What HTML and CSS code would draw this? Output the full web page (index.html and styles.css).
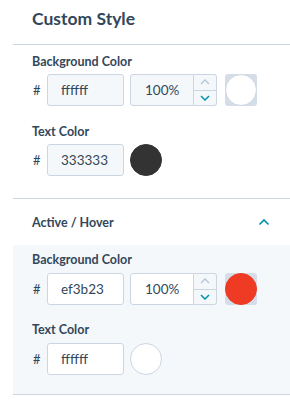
FILE: index.html
```html
<!DOCTYPE html>
<html lang="en">
<head>
    <meta charset="UTF-8">
    <meta name="viewport" content="width=device-width, initial-scale=1.0">
    <title>Custom Style</title>
    <link rel="stylesheet" href="styles.css">
</head>
<body>
    <div class="panel">
        <h3 class="title">Custom Style</h3>

        <div class="group">
            <div class="field">
                <label class="field-label">Background Color</label>
                <div class="field-row">
                    <span class="hash">#</span>
                    <input class="hex-input" type="text" value="ffffff">
                    <div class="alpha">
                        <input class="alpha-input" type="text" value="100%">
                        <div class="spinner">
                            <span class="spin spin-up">
                                <svg width="10" height="6" viewBox="0 0 10 6"><path d="M1 5 L5 1 L9 5" fill="none" stroke="#b6c5d6" stroke-width="1.3"/></svg>
                            </span>
                            <span class="spin spin-down">
                                <svg width="10" height="6" viewBox="0 0 10 6"><path d="M1 1 L5 5 L9 1" fill="none" stroke="#0091ae" stroke-width="1.5"/></svg>
                            </span>
                        </div>
                    </div>
                    <div class="swatch-alpha"><span class="dot dot-white"></span></div>
                </div>
            </div>
            <div class="field">
                <label class="field-label">Text Color</label>
                <div class="field-row">
                    <span class="hash">#</span>
                    <input class="hex-input" type="text" value="333333">
                    <span class="dot dot-dark"></span>
                </div>
            </div>
        </div>

        <div class="section-head">
            <span>Active / Hover</span>
            <svg width="12" height="8" viewBox="0 0 12 8"><path d="M1.5 6.5 L6 2 L10.5 6.5" fill="none" stroke="#0091ae" stroke-width="1.6"/></svg>
        </div>

        <div class="group group-shaded">
            <div class="field">
                <label class="field-label">Background Color</label>
                <div class="field-row">
                    <span class="hash">#</span>
                    <input class="hex-input" type="text" value="ef3b23">
                    <div class="alpha">
                        <input class="alpha-input" type="text" value="100%">
                        <div class="spinner">
                            <span class="spin spin-up">
                                <svg width="10" height="6" viewBox="0 0 10 6"><path d="M1 5 L5 1 L9 5" fill="none" stroke="#b6c5d6" stroke-width="1.3"/></svg>
                            </span>
                            <span class="spin spin-down">
                                <svg width="10" height="6" viewBox="0 0 10 6"><path d="M1 1 L5 5 L9 1" fill="none" stroke="#0091ae" stroke-width="1.5"/></svg>
                            </span>
                        </div>
                    </div>
                    <div class="swatch-alpha"><span class="dot dot-red"></span></div>
                </div>
            </div>
            <div class="field">
                <label class="field-label">Text Color</label>
                <div class="field-row">
                    <span class="hash">#</span>
                    <input class="hex-input" type="text" value="ffffff">
                    <span class="dot dot-white"></span>
                </div>
            </div>
        </div>
    </div>
</body>
</html>
```

FILE: styles.css
```css
body {
    font-family: Lato, "Noto Sans", sans-serif;
    margin: 0;
    padding: 0;
    background-color: white;
    color: #33475b;
}
.panel {
    margin-left: 13px;
}
.title {
    margin: 0;
    height: 45px;
    padding: 7px 0 0 19px;
    box-sizing: border-box;
    font-size: 17.5px;
    font-weight: 700;
    line-height: 24px;
    border-bottom: 1px solid #cbd6e2;
}
.group {
    padding: 9px 19px 22px;
    border-bottom: 1px solid #cbd6e2;
}
.group-shaded {
    background-color: #f5f8fa;
    padding: 7px 19px 19px;
}
.field + .field {
    margin-top: 18px;
}
.group-shaded .field + .field {
    margin-top: 17px;
}
.field-label {
    display: block;
    font-size: 12.5px;
    font-weight: 700;
    line-height: 16px;
    margin-bottom: 4px;
}
.group-shaded .field-label {
    margin-bottom: 5px;
}
.field-row {
    display: flex;
    align-items: center;
    height: 32px;
}
.hash {
    width: 14px;
    padding-left: 1px;
    font-size: 13px;
}
.hex-input,
.alpha-input {
    box-sizing: border-box;
    height: 32px;
    border: 1px solid #cbd6e2;
    border-radius: 3px;
    background-color: #f5f8fa;
    color: #33475b;
    font-family: inherit;
    font-size: 13.5px;
    padding: 0 0 0 13px;
    outline: none;
}
.hex-input {
    width: 77px;
    margin-right: 6px;
}
.group-shaded .hex-input,
.group-shaded .alpha-input {
    background-color: white;
}
.alpha {
    display: flex;
    width: 87px;
    height: 32px;
    margin-right: 8px;
}
.alpha-input {
    width: 64px;
    padding-left: 14px;
    border-radius: 3px 0 0 3px;
}
.spinner {
    display: flex;
    flex-direction: column;
    width: 23px;
    box-sizing: border-box;
    border: 1px solid #cbd6e2;
    border-left: none;
    border-radius: 0 3px 3px 0;
    background-color: #f5f8fa;
}
.spin {
    flex: 1;
    display: flex;
    align-items: center;
    justify-content: center;
}
.spin-up {
    border-bottom: 1px solid #cbd6e2;
}
.swatch-alpha {
    width: 32px;
    height: 32px;
    border-radius: 3px;
    background-color: #d5dee8;
    display: flex;
}
.dot {
    display: block;
    width: 32px;
    height: 32px;
    box-sizing: border-box;
    border-radius: 50%;
    border: 1px solid #cbd6e2;
}
.dot-white {
    background-color: white;
}
.dot-dark {
    background-color: #333333;
    border-color: #333333;
}
.dot-red {
    background-color: #ef3b23;
    border-color: #ef3b23;
}
.section-head {
    display: flex;
    align-items: center;
    justify-content: space-between;
    height: 46px;
    padding: 0 20px 0 19px;
    font-size: 12.5px;
    font-weight: 700;
}
```
